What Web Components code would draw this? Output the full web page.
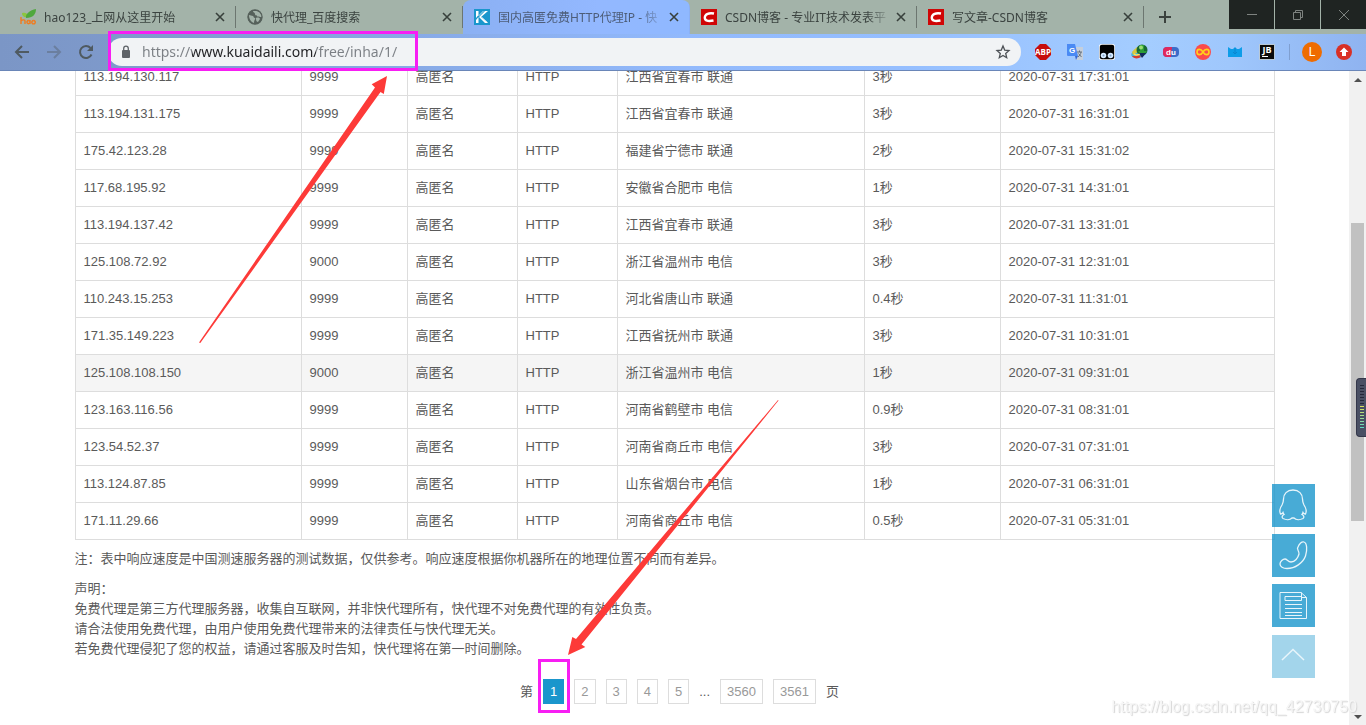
<!DOCTYPE html>
<html lang="zh-CN">
<head>
<meta charset="utf-8">
<title>国内高匿免费HTTP代理IP - 快代理</title>
<style>
  html, body { margin: 0; height: 100%; overflow: hidden; background: #fff; }
  body { font-family: "Liberation Sans", Arial, "Noto Sans CJK SC", sans-serif; font-size: 13px; color: #5a5a5a; }
</style>
</head>
<body>
<browser-window>
  <tab-strip slot="tabs">
    <browser-tab label="hao123_上网从这里开始">
      <svg slot="icon" viewBox="0 0 16 16" width="16" height="16"><path d="M2 4c3-1 6 0 6 4C4 9 2 7 2 4z" fill="#8cc63f"/><path d="M6 9C5 5 10 1 16 0c0 5-3 9-10 9z" fill="#4fa83d"/><path d="M1 8v7M1 12c2-2 4-1 4 0v3M8.500 11.500a1.600 1.600 0 1 0 .1 0M10 11v4M13.500 11.500a1.700 1.700 0 1 0 .1 0" fill="none" stroke="#f07c1f" stroke-width="1.400"/></svg>
    </browser-tab>
    <browser-tab label="快代理_百度搜索">
      <svg slot="icon" viewBox="0 0 16 16" width="16" height="16"><circle cx="8" cy="8" r="7.300" fill="#56615b"/><path d="M2 6l4 1c1 1 0 1 2 2 1 1-1 2-1 5-3-1-5-4-5-8zM6 2c0 2 2 1 2 3s2 1 2 2 2 0 3 1h2c0-3-2-6-5-6zM9 9c2-1 4 0 4 1l-2 3c-2 0-2-3-2-4z" fill="#a3b3a9"/><circle cx="8" cy="8" r="7" fill="none" stroke="#56615b" stroke-width="1.300"/></svg>
    </browser-tab>
    <browser-tab label="国内高匿免费HTTP代理IP - 快" active>
      <svg slot="icon" viewBox="0 0 16 16" width="16" height="16"><path fill="#1a96cc" d="M0 0h16v16H0z"/><path d="M2 2h2.500v4L2 9zM2 11l2.500-3v6H2zM14 2H11L5 8h2zM7 8H5l6 6h3z" fill="#fff"/><path d="M9.500 2 4.500 7M7.500 8l6 5.500" stroke="#fff" stroke-width=".7"/></svg>
    </browser-tab>
    <browser-tab label="CSDN博客 - 专业IT技术发表平">
      <svg slot="icon" viewBox="0 0 16 16" width="16" height="16"><path fill="#d00606" d="M0 0h16v16H0z"/><path d="M13 4.500C8 3.500 4 5 3.800 8.500 3.700 12 7 12.500 12.500 11.500" fill="none" stroke="#fff" stroke-width="2.400"/></svg>
    </browser-tab>
    <browser-tab label="写文章-CSDN博客">
      <svg slot="icon" viewBox="0 0 16 16" width="16" height="16"><path fill="#d00606" d="M0 0h16v16H0z"/><path d="M13 4.500C8 3.500 4 5 3.800 8.500 3.700 12 7 12.500 12.500 11.500" fill="none" stroke="#fff" stroke-width="2.400"/></svg>
    </browser-tab>
  </tab-strip>
  <address-toolbar slot="toolbar" url="https://www.kuaidaili.com/free/inha/1/"></address-toolbar>
  <page-content>
    <proxy-table></proxy-table>
    <page-notes>
      <p>注：表中响应速度是中国测速服务器的测试数据，仅供参考。响应速度根据你机器所在的地理位置不同而有差异。</p>
      <p>声明：<br>免费代理是第三方代理服务器，收集自互联网，并非快代理所有，快代理不对免费代理的有效性负责。<br>请合法使用免费代理，由用户使用免费代理带来的法律责任与快代理无关。<br>若免费代理侵犯了您的权益，请通过客服及时告知，快代理将在第一时间删除。</p>
    </page-notes>
    <page-pager></page-pager>
  </page-content>
  <scroll-bar slot="scroll"></scroll-bar>
</browser-window>
<side-tools></side-tools>
<level-meter></level-meter>
<water-mark>https://blog.csdn.net/qq_42730750</water-mark>
<markup-layer></markup-layer>

<script>
const define = (name, html, setup) => {
  const template = document.createElement('template');
  template.innerHTML = html;
  customElements.define(name, class extends HTMLElement {
    constructor() {
      super();
      this.attachShadow({ mode: 'open' }).append(template.content.cloneNode(true));
    }
    connectedCallback() { if (setup) setup(this, this.shadowRoot); }
  });
};

define('browser-window', `
<style>
  :host { display: flex; flex-direction: column; height: 100vh; }
  .body { flex: 1; min-height: 0; display: flex; }
  main { flex: 1; min-width: 0; overflow: hidden; }
</style>
<slot name="tabs"></slot><slot name="toolbar"></slot>
<div class="body"><main><slot></slot></main><slot name="scroll"></slot></div>`);

define('tab-strip', `
<style>
  :host { display: flex; height: 34px; background: #a3b3a9; padding-left: 9px; flex: none; }
  .tabs { display: flex; flex: 0 1 1135px; min-width: 0; }
  button { border: 0; padding: 0; margin: 0; background: none; display: grid; place-items: center; }
  .new { width: 42px; height: 34px; }
  .win { margin-left: auto; display: flex; gap: 1px; height: 29px; }
  .win button { width: 45px; background: #1f2422; }
  svg { fill: none; display: block; }
</style>
<div class="tabs"><slot></slot></div>
<button class="new" aria-label="新标签页"><svg width="14" height="14" stroke="#3b423e" stroke-width="2"><path d="M7 1v12M1 7h12"/></svg></button>
<div class="win">
  <button aria-label="最小化"><svg width="12" height="12" stroke="#7e8380"><path d="M1 5.500h10"/></svg></button>
  <button aria-label="还原"><svg width="12" height="12" stroke="#7e8380"><path d="M1.500 3.500h7v7h-7zM3.500 3.500v-2h7v7h-2"/></svg></button>
  <button aria-label="关闭"><svg width="12" height="12" stroke="#7e8380"><path d="m1 1 10 10M11 1 1 11"/></svg></button>
</div>`);

define('browser-tab', `
<style>
  :host { display: flex; align-items: center; flex: 0 1 227px; min-width: 0; box-sizing: border-box; padding: 0 7px 0 11px;
    border-right: 1px solid transparent; border-image: linear-gradient(transparent 7px, #6c7670 7px 27px, transparent 27px) 1;
    font: 12px/34px "Noto Sans", "Noto Sans CJK SC", sans-serif; color: #3b4340; }
  :host([active]) { background: linear-gradient(90deg, #8bb0f3, #93b8ff 60%, #8fb8ff); border-image: none; border-radius: 8px 8px 0 0; color: #4d5d78; }
  ::slotted(svg) { flex: none; display: block; }
  span { flex: 1; min-width: 0; margin-left: 8px; padding-top: 2px; overflow: hidden; white-space: nowrap;
    -webkit-mask-image: linear-gradient(90deg, #000 calc(100% - 24px), transparent); mask-image: linear-gradient(90deg, #000 calc(100% - 24px), transparent); }
  button { flex: none; border: 0; background: none; padding: 0; margin-left: 2px; width: 16px; height: 16px; display: grid; place-items: center; }
</style>
<slot name="icon"></slot><span></span>
<button aria-label="关闭标签页"><svg width="10" height="10" stroke="#38403c" stroke-width="1.600"><path d="m1 1 8 8M9 1 1 9"/></svg></button>`,
(host, root) => { root.querySelector('span').textContent = host.getAttribute('label'); });

define('address-toolbar', `
<style>
  :host { display: flex; align-items: center; height: 36px; flex: none; padding: 0 6px; border-bottom: 1px solid #6a86b8;
    background: linear-gradient(90deg, #7b96c6 0, #7f9bcd 12%, #88abe8 32%, #92b9fc 50%, #95beff 66%, #a4cdff 84%, #9fc7fc 90%, #8fb3f0 100%); }
  button { border: 0; padding: 0; margin: 0; background: none; width: 32px; height: 32px; display: grid; place-items: center; }
  svg { display: block; }
  .box { flex: 1; min-width: 0; margin: 0 6px; height: 28px; border-radius: 14px; background: #f1f3f5; display: flex; align-items: center; padding: 0 2px 0 12px; }
  input { flex: 1; min-width: 0; margin-left: 10px; padding: 0; border: 0; outline: 0; height: 28px;
    font: 14px/28px "Noto Sans", "Open Sans", sans-serif; color: transparent;
    background: linear-gradient(90deg, #7b7f84 50px, #202124 50px 174px, #7b7f84 174px); -webkit-background-clip: text; background-clip: text; }
  i { width: 1px; height: 16px; margin: 0 6px; background: #7f9fd0; }
</style>
<button aria-label="后退"><svg width="16" height="16" fill="none" stroke="#4f5a61" stroke-width="2"><path d="M15 8H2M8 2 2 8l6 6"/></svg></button>
<button aria-label="前进"><svg width="16" height="16" fill="none" stroke="#6b7f9f" stroke-width="2"><path d="M1 8h13M8 2l6 6-6 6"/></svg></button>
<button aria-label="重新加载"><svg width="16" height="16" fill="none" stroke="#4f5a61" stroke-width="2"><path d="M13.500 10.500A6 6 0 1 1 12.500 4"/><path d="M15 1v6H9z" fill="#4f5a61" stroke="none"/></svg></button>
<div class="box">
  <svg width="12" height="14"><path d="M3 5h6a1 1 0 0 1 1 1v6a1 1 0 0 1-1 1H3a1 1 0 0 1-1-1V6a1 1 0 0 1 1-1z" fill="#5f6368"/><path d="M3.700 6V3.500a2.300 2.300 0 0 1 4.600 0V6" fill="none" stroke="#5f6368" stroke-width="1.300"/></svg>
  <input type="text" aria-label="地址栏" spellcheck="false">
  <button aria-label="收藏"><svg width="16" height="16" fill="none" stroke="#4d5156" stroke-width="1.300"><path d="m8 2 1.700 4.100 4.300.4-3.300 2.900 1 4.300L8 11.400l-3.700 2.300 1-4.300L2 6.500l4.300-.4z"/></svg></button>
</div>
<button aria-label="Adblock Plus"><svg width="16" height="16"><path d="M5 0h6l5 5v6l-5 5H5l-5-5V5z" fill="#c70d0d"/><text x="8" y="11" text-anchor="middle" font-family="Open Sans" font-weight="700" font-size="8" fill="#fff">ABP</text></svg></button>
<button aria-label="翻译"><svg width="16" height="16"><path d="M7 3h9v13H9z" fill="#c5cfdc"/><path d="M0 0h8l3 12H1a1 1 0 0 1-1-1z" fill="#4a8af4"/><path d="m8 12h3l-2 4z" fill="#3367d6"/><path d="M10 8h5M12.500 6.500V8M14 8c0 2-2 4-3 5M11.500 9.500l3 3.500" stroke="#66717c" fill="none"/><text x="5" y="9" text-anchor="middle" font-family="Liberation Sans" font-weight="700" font-size="8" fill="#fff">G</text></svg></button>
<button aria-label="Tampermonkey"><svg width="16" height="16"><rect width="16" height="16" rx="2.500" fill="#fff"/><rect x=".8" y=".8" width="14.400" height="14.400" rx="2" fill="#000"/><circle cx="4.500" cy="11.500" r="2.800" fill="#d6eaff"/><circle cx="11.500" cy="11.500" r="2.800" fill="#d6eaff"/><circle cx="4.500" cy="11.500" r="1" fill="#7fa3c4"/><circle cx="11.500" cy="11.500" r="1" fill="#7fa3c4"/></svg></button>
<button aria-label="下载管理"><svg width="17" height="16"><ellipse cx="8" cy="9" rx="8" ry="4.500" transform="rotate(-18 8 9)" fill="#3fb4df"/><path d="M1 8c3-4 6-6 10-6l-4 6-5 3z" fill="#d8c63b"/><circle cx="11" cy="6" r="5.500" fill="#176934"/><path d="M9 1h4v6h3l-4.500 6L7 7h2z" fill="#2c9e36"/><circle cx="10" cy="3.500" r="2" fill="#9add75"/><path d="M1 12c2 3 6 3 9 1l-2-2-4 1z" fill="#d63c2c"/><path d="M3 10c2 2 4 1 6 0" fill="none" stroke="#f5e663" stroke-width="1.500"/><path d="m8 9 3 5 4-5z" fill="#15285c"/></svg></button>
<button aria-label="百度助手"><svg width="16" height="16"><rect y="3" width="16" height="10" rx="4" fill="#3b6cc9"/><path d="M9 3H4a4 4 0 0 0-4 4v2a4 4 0 0 0 4 4h4z" fill="#e0295c"/><text x="8" y="11" text-anchor="middle" font-family="Liberation Sans" font-weight="700" font-size="8" fill="#fff">du</text></svg></button>
<button aria-label="Infinity"><svg width="16" height="16"><circle cx="8" cy="8" r="8" fill="#fb4b4b"/><path d="M8 8C6 4.500 2 4.500 2 8S6 11.500 8 8s6-3.500 6 0S10 11.500 8 8z" fill="none" stroke="#ffd31a" stroke-width="1.600"/></svg></button>
<button aria-label="皇冠"><svg width="16" height="16"><path d="m1 3 3 2h2l2-2 2 2h2l3-2v10H1z" fill="#0d9de8"/><path d="M8 4v6M6 8l2 2 2-2" fill="none" stroke="#0a86cf"/></svg></button>
<button aria-label="JetBrains"><svg width="16" height="16"><path d="M0 0h16v16H0z" fill="#b9c9d6"/><path d="M1 1h14v14H1z" fill="#0b0b0b"/><path d="M3 12h6v1H3z" fill="#fff"/><text x="8" y="9" text-anchor="middle" font-family="Open Sans" font-weight="700" font-size="9" fill="#fff">JB</text></svg></button>
<i></i>
<button aria-label="用户"><svg width="20" height="20"><circle cx="10" cy="10" r="10" fill="#ef6c00"/><text x="10" y="14" text-anchor="middle" font-family="Liberation Sans" font-size="12" fill="#fff">L</text></svg></button>
<button aria-label="更新"><svg width="16" height="16"><circle cx="8" cy="8" r="8" fill="#d93025"/><path d="m8 3.500 4.500 4.500H10v4H6V8H3.500z" fill="#fff"/></svg></button>`,
(host, root) => { root.querySelector('input').value = host.getAttribute('url'); });

define('page-content', `
<style>
  :host { display: block; max-width: 1200px; margin: -13px auto 0; }
</style><slot></slot>`);

const rows = [
  ['113.194.130.117', '9999', '江西省宜春市 联通', '3秒', '17:31:01'],
  ['113.194.131.175', '9999', '江西省宜春市 联通', '3秒', '16:31:01'],
  ['175.42.123.28', '9999', '福建省宁德市 联通', '2秒', '15:31:02'],
  ['117.68.195.92', '9999', '安徽省合肥市 电信', '1秒', '14:31:01'],
  ['113.194.137.42', '9999', '江西省宜春市 联通', '3秒', '13:31:01'],
  ['125.108.72.92', '9000', '浙江省温州市 电信', '3秒', '12:31:01'],
  ['110.243.15.253', '9999', '河北省唐山市 联通', '0.4秒', '11:31:01'],
  ['171.35.149.223', '9999', '江西省抚州市 联通', '3秒', '10:31:01'],
  ['125.108.108.150', '9000', '浙江省温州市 电信', '1秒', '09:31:01'],
  ['123.163.116.56', '9999', '河南省鹤壁市 电信', '0.9秒', '08:31:01'],
  ['123.54.52.37', '9999', '河南省商丘市 电信', '3秒', '07:31:01'],
  ['113.124.87.85', '9999', '山东省烟台市 电信', '1秒', '06:31:01'],
  ['171.11.29.66', '9999', '河南省商丘市 电信', '0.5秒', '05:31:01'],
];
define('proxy-table', `
<style>
  :host { display: block; }
  table { width: 100%; table-layout: fixed; border-collapse: collapse; }
  td { border: 1px solid #ddd; padding: 0 8px; height: 36px; line-height: 20px; box-sizing: border-box; white-space: nowrap; }
  tr { height: 37px; }
  tr.hover { background: #f5f5f5; }
</style>
<table><colgroup><col style="width:226px"><col style="width:106px"><col style="width:110px"><col style="width:100px"><col style="width:247px"><col style="width:136px"><col></colgroup><tbody></tbody></table>`,
(host, root) => {
  const body = root.querySelector('tbody');
  rows.forEach(([ip, port, place, speed, time], index) => {
    const tr = body.insertRow();
    if (index === 8) tr.className = 'hover';
    [ip, port, '高匿名', 'HTTP', place, speed, '2020-07-31 ' + time].forEach(text => { tr.insertCell().textContent = text; });
  });
});

define('page-notes', `
<style>
  :host { display: block; line-height: 20px; padding-top: 9px; }
  ::slotted(p) { margin: 0 0 10px; }
</style><slot></slot>`);

define('page-pager', `
<style>
  :host { display: block; padding-top: 10px; }
  ul { display: flex; justify-content: center; list-style: none; margin: 0; padding: 0; line-height: 23px; }
  li { margin-left: 10px; padding: 1px 0; }
  li:has(a) { padding: 0; }
  a { display: block; padding: 0 6px; border: 1px solid #ddd; color: #999; text-decoration: none; }
  a[aria-current] { background: #1a96cc; border-color: #1a96cc; color: #fff; }
</style>
<nav aria-label="分页"><ul><li>第</li><li><a href="#1" aria-current="page">1</a></li><li><a href="#2">2</a></li><li><a href="#3">3</a></li><li><a href="#4">4</a></li><li><a href="#5">5</a></li><li>...</li><li><a href="#3560">3560</a></li><li><a href="#3561">3561</a></li><li>页</li></ul></nav>`);

define('scroll-bar', `
<style>
  :host { display: flex; flex-direction: column; width: 17px; flex: none; background: #f1f1f1; }
  button { border: 0; padding: 0; background: none; height: 17px; display: grid; place-items: center; flex: none; }
  .before { flex: 135; } .thumb { flex: 298; margin: 0 2px; background: #c1c1c1; } .after { flex: 187; }
</style>
<button aria-label="向上滚动"><svg width="8" height="4"><path d="M4 0 8 4H0z" fill="#505050"/></svg></button>
<div class="before"></div><div class="thumb"></div><div class="after"></div>
<button aria-label="向下滚动"><svg width="8" height="4"><path d="M0 0h8L4 4z" fill="#505050"/></svg></button>`);

define('side-tools', `
<style>
  :host { position: fixed; right: 51px; bottom: 47px; display: grid; gap: 7px; }
  a { width: 43px; height: 43px; display: grid; place-items: center; background: rgba(26, 150, 204, .8); }
  a:last-child { background: rgba(26, 150, 204, .4); margin-top: 1px; }
  svg { display: block; fill: none; stroke: #e8f5fb; stroke-width: 1.300; }
</style>
<a href="#qq" aria-label="QQ客服"><svg width="33" height="33"><path d="M16 1C10 1 6.500 5 6.500 10c0 3-.5 4-1.500 6-2 3-3 6-1.500 9 1 0 2-.5 2.500-1.500.3 1 .5 1.500 1 2-2 1-2.500 3-1 4 3 1.500 7 1.500 9-.5h2c2 2 6 2 9 .5 1.500-1 1-3-1-4 .5-.5.7-1 1-2 .5 1 1.500 1.500 2.500 1.500 1.500-3 .5-6-1.500-9-1-2-1.500-3-1.500-6C25.500 5 22 1 16 1z"/></svg></a>
<a href="#phone" aria-label="电话"><svg width="33" height="33"><path d="M21 8c1-3 4-6 6-5 3 1 3.500 8 1.500 14C26 24 18 29.500 10 29.500c-4 0-7-2-7-4.500s3-5 5-5 3 3 6 3c4 0 7-4 8-8 .5-3-3-5-1-7z"/></svg></a>
<a href="#help" aria-label="帮助文档"><svg width="33" height="33"><path d="M3 3.500h21l5.500 5v21H3zM24.500 3.500v5h5M8 7.500h16.500v4H8zM8 15.500h17M8 19.500h17M8 23.500h17M8 26.500h17" stroke-width="1"/></svg></a>
<a href="#top" aria-label="返回顶部"><svg width="33" height="33"><path d="M5 20 16 9.500 27 20" stroke-width="1.500"/></svg></a>`);

define('level-meter', `
<style>
  :host { position: fixed; right: 0; top: 378px; width: 10px; height: 59px; box-sizing: border-box; border: 1px solid #34374a; border-right: 0; border-radius: 4px 0 0 4px; background: #4a5064; padding: 6px 2px 6px 3px; }
  div { height: 100%; background: repeating-linear-gradient(transparent 0 1px, #4a5064 1px 3px), linear-gradient(#24283a 20px, #e0df55 20px, #a2dc91 32px, #52d8cc); }
</style><div></div>`);

define('water-mark', `
<style>
  :host { position: fixed; right: 9px; bottom: 9px; font-size: 16px; line-height: 18px; color: #f6f6f6; text-shadow: 1px 1px 1px #d4d4d4; pointer-events: none; }
</style><slot></slot>`);

define('markup-layer', `
<style>
  :host { position: fixed; inset: 0; pointer-events: none; }
  svg { display: block; width: 100%; height: 100%; }
</style>
<svg aria-hidden="true">
  <g fill="none" stroke="#f71ef3" stroke-width="3"><path d="M109.500 32.500h307v37h-307zM539.500 660.500h29v51h-29z"/></g>
  <g fill="#fd3a38"><path d="m387 76-15.300 8.300 3.300 3.200L199 342.500l1.300.5L380.500 92l3.300 2z"/><path d="m568 655 4.300-18 3.700 2L778 400l.5.500-197 244 3.800 2.500z"/></g>
</svg>`);
</script>
</body>
</html>
